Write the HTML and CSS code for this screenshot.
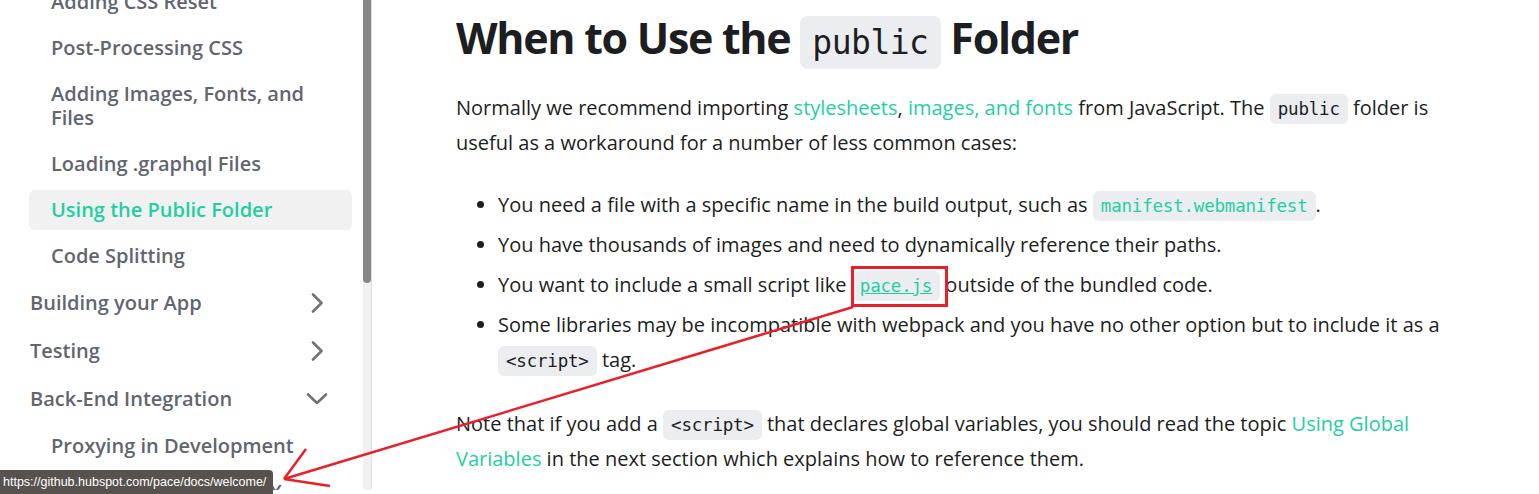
FILE: index.html
```html
<!DOCTYPE html>
<html lang="en">
<head>
<meta charset="utf-8">
<title>Using the Public Folder</title>
<link rel="stylesheet" href="styles.css">
</head>
<body>
<div class="page">
  <aside class="sidebar">
    <nav class="menu">
      <ul class="menu-list">
        <li>
          <ul class="sub-list">
            <li><a class="sub-link" href="#">Adding CSS Reset</a></li>
            <li><a class="sub-link" href="#">Post-Processing CSS</a></li>
            <li><a class="sub-link" href="#">Adding Images, Fonts, and Files</a></li>
            <li><a class="sub-link" href="#">Loading .graphql Files</a></li>
            <li><a class="sub-link active" href="#">Using the Public Folder</a></li>
            <li><a class="sub-link" href="#">Code Splitting</a></li>
          </ul>
        </li>
        <li>
          <a class="cat-link" href="#">Building your App
            <svg class="chevron" viewBox="0 0 24 24"><path d="M8 3.5L16.5 12L8 20.5"/></svg>
          </a>
        </li>
        <li>
          <a class="cat-link" href="#">Testing
            <svg class="chevron" viewBox="0 0 24 24"><path d="M8 3.5L16.5 12L8 20.5"/></svg>
          </a>
        </li>
        <li>
          <a class="cat-link" href="#">Back-End Integration
            <svg class="chevron" viewBox="0 0 24 24"><path d="M3 7.5L12 16L21 7.5"/></svg>
          </a>
          <ul class="sub-list">
            <li><a class="sub-link" href="#">Proxying in Development</a></li>
            <li><a class="sub-link" href="#">Fetching Data with AJAX Requests</a></li>
          </ul>
        </li>
      </ul>
    </nav>
    <div class="scrollbar"><div class="scroll-thumb"></div></div>
  </aside>

  <main class="content">
    <article class="doc">
      <h1>When to Use the <code>public</code> Folder</h1>
      <p>Normally we recommend importing <a href="#">stylesheets</a>, <a href="#">images, and fonts</a> from JavaScript. The <code>public</code> folder is useful as a workaround for a number of less common cases:</p>
      <ul class="bullets">
        <li>You need a file with a specific name in the build output, such as <a href="#"><code>manifest.webmanifest</code></a>.</li>
        <li>You have thousands of images and need to dynamically reference their paths.</li>
        <li>You want to include a small script like <a class="hovered" href="#"><code>pace.js</code></a> outside of the bundled code.</li>
        <li>Some libraries may be incompatible with webpack and you have no other option but to include it as a <code>&lt;script&gt;</code> tag.</li>
      </ul>
      <p>Note that if you add a <code>&lt;script&gt;</code> that declares global variables, you should read the topic <a href="#">Using Global Variables</a> in the next section which explains how to reference them.</p>
    </article>
  </main>
</div>

<div class="status-url">https://github.hubspot.com/pace/docs/welcome/</div>

<svg class="markup" viewBox="0 0 1539 494" width="1539" height="494">
  <rect x="852.5" y="267.5" width="94" height="38" />
  <path d="M853 307L284 479M284 479L306 449M284 479L330 486" />
</svg>
</body>
</html>
```

FILE: styles.css
```css
* {
  box-sizing: border-box;
}

html,
body {
  margin: 0;
  height: 494px;
  overflow: hidden;
  background: #fff;
}

body {
  font-family: "Open Sans", "Noto Sans", sans-serif;
  color: #1c1e21;
}

a {
  text-decoration: none;
}

.page {
  display: flex;
  height: 494px;
}

/* ---- sidebar ---- */
.sidebar {
  width: 372px;
  flex: none;
  display: flex;
  height: 490px;
}

.menu {
  flex: 1;
  padding: 0 11px 0 9px;
  overflow: hidden;
}

.menu-list,
.sub-list {
  list-style: none;
  margin: 0;
  padding: 0;
}

.menu-list {
  margin-top: -24px;
}

.sub-list {
  padding-left: 20px;
}

.menu-list li {
  margin-top: 6px;
}

.sub-link,
.cat-link {
  display: flex;
  align-items: center;
  justify-content: space-between;
  color: #5f6670;
  font-size: 20px;
  font-weight: 600;
  line-height: 24px;
  border-radius: 6px;
}

.sub-link {
  padding: 8px 22px;
}

.cat-link {
  padding: 9px 23px 9px 21px;
}

.sub-link.active {
  background: #f1f1f1;
  color: #1fcfa3;
}

.chevron {
  width: 24px;
  height: 24px;
  fill: none;
  stroke: #6f7378;
  stroke-width: 2.6;
  stroke-linecap: round;
  stroke-linejoin: round;
}

.scrollbar {
  width: 9px;
  flex: none;
  background: #f1f1f1;
  border-right: 1px solid #dedede;
  border-radius: 0 0 4px 4px;
}

.scroll-thumb {
  height: 283px;
  background: #878787;
  border-radius: 0 0 4px 4px;
}

/* ---- article ---- */
.content {
  flex: 1;
  padding: 10px 0 0 84px;
}

.doc {
  width: 1000px;
}

.doc h1 {
  margin: 0 0 25px;
  font-size: 43px;
  line-height: 55px;
  font-weight: 700;
  letter-spacing: -1.3px;
}

.doc p,
.doc li {
  font-size: 20px;
  line-height: 35px;
}

.doc p {
  margin: 0 0 27px;
}

.doc a {
  color: #1fcfa3;
}

.doc code {
  font-family: "DejaVu Sans Mono", monospace;
  font-size: 17.5px;
  line-height: 1;
  background: #ebedf0;
  padding: 5px 8px;
  border-radius: 6px;
  letter-spacing: -0.2px;
}

.doc h1 code {
  font-size: 33px;
  font-weight: 400;
  padding: 7px 12px;
  border-radius: 8px;
  letter-spacing: -0.5px;
}

.doc a.hovered code {
  text-decoration: underline;
}

.bullets {
  margin: 0 0 29px;
  padding-left: 42px;
}

.bullets li + li {
  margin-top: 5px;
}

/* ---- browser status url ---- */
.status-url {
  position: fixed;
  left: 0;
  bottom: 0;
  height: 24px;
  padding: 3px 7px 0 3px;
  background: #58524f;
  color: #fff;
  font-family: "Liberation Sans", Arial, sans-serif;
  font-size: 12.5px;
  line-height: 18px;
  border-top-right-radius: 4px;
}

/* ---- red callout drawn on top ---- */
.markup {
  position: absolute;
  top: 0;
  left: 0;
  pointer-events: none;
  fill: none;
  stroke: #e8202a;
  stroke-width: 2.5;
}

.markup rect {
  stroke-width: 3;
}
```
